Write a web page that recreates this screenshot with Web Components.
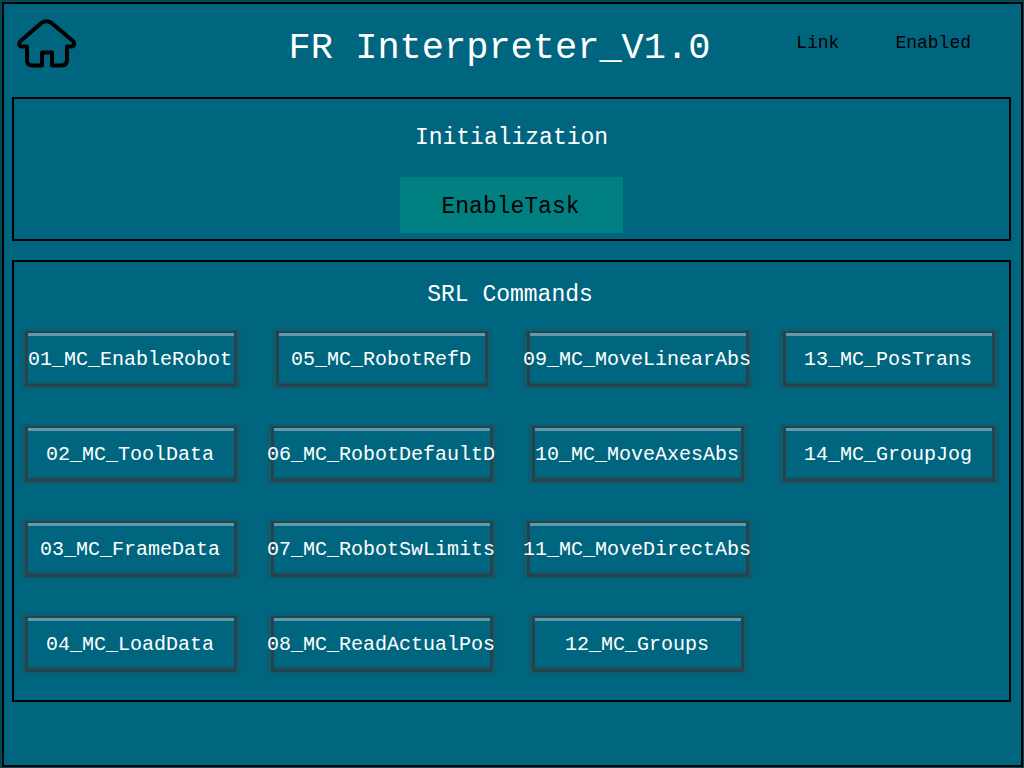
<!DOCTYPE html>
<html lang="en">
<head>
<meta charset="utf-8">
<title>FR Interpreter</title>
<style>
html, body { margin: 0; }
body { background: #006680; font-family: "Liberation Mono", monospace; color: #fff; }
</style>
</head>
<body>
<robot-screen></robot-screen>
<script>
class PanelButton extends HTMLElement {
  connectedCallback() {
    this.attachShadow({ mode: "open" }).innerHTML = `
      <style>
        :host { display: block; width: 212px; }
        :host([wide]) { width: 222px; }
        button {
          box-sizing: border-box; width: 100%; height: 56px; margin: 0; padding: 3px 2px 0 0;
          display: flex; align-items: center; justify-content: center;
          background: linear-gradient(#5c9cac, #5c9cac) top / 100% 3px no-repeat padding-box, #006680;
          border: solid #29434c; border-width: 2px 3px 3px;
          box-shadow: 4px 0 #0d5d70, -4px 0 #0d5d70, 4px 2px #0d5d70, -4px 2px #0d5d70, 4px -2px #0d5d70, -4px -2px #0d5d70, inset 0 -2px #145564;
          color: #fff; font: 20px/24px "Liberation Mono", monospace; white-space: nowrap;
        }
        span { flex: none; }
      </style>
      <button type="button"><span><slot></slot></span></button>`;
  }
}
customElements.define("panel-button", PanelButton);

class TaskButton extends HTMLElement {
  connectedCallback() {
    this.attachShadow({ mode: "open" }).innerHTML = `
      <style>
        :host { display: block; }
        button {
          box-sizing: border-box; width: 223px; height: 56px; padding: 3px 2px 0 0; border: 0; display: block;
          background: #008080; color: #000; font: 23px/32px "Liberation Mono", monospace;
        }
      </style>
      <button type="button"><slot></slot></button>`;
  }
}
customElements.define("task-button", TaskButton);

class GroupPanel extends HTMLElement {
  connectedCallback() {
    this.attachShadow({ mode: "open" }).innerHTML = `
      <style>
        :host { display: block; }
        section {
          box-sizing: border-box; border: 2px solid #000;
          display: flex; flex-direction: column; align-items: center;
          padding: var(--panel-pad, 23px 0 6px);
        }
        h2 { margin: 0; font-size: 23px; line-height: 32px; font-weight: 400; }
        .body { width: 100%; display: flex; justify-content: center; margin-top: var(--title-gap, 23px); }
        .body slot { flex: 1; display: flex; justify-content: center; }
      </style>
      <section><h2><slot name="title"></slot></h2><div class="body"><slot></slot></div></section>`;
  }
}
customElements.define("group-panel", GroupPanel);

class HomeButton extends HTMLElement {
  connectedCallback() {
    this.attachShadow({ mode: "open" }).innerHTML = `
      <style>
        :host { display: block; }
        button { display: block; padding: 0; border: 0; background: none; color: #000; }
        svg { display: block; }
      </style>
      <button type="button" aria-label="Home">
        <svg width="60" height="50" viewBox="0 0 60 50" fill="none" stroke="currentColor" stroke-width="4" stroke-linejoin="round">
          <path d="M25 3.5 Q29.500 1 34 3.5 L56.500 22.500 Q58.500 27.500 54.500 27.500 H50 V41 Q50 46.500 44.500 46.500 H35 V33.500 H25 V46.500 H15.500 Q10 46.500 10 41 V27.500 H5 Q1 27.500 3 22.500 Z"/>
        </svg>
      </button>`;
  }
}
customElements.define("home-button", HomeButton);

class RobotScreen extends HTMLElement {
  connectedCallback() {
    const columns = [
      [["01_MC_EnableRobot"], ["02_MC_ToolData"], ["03_MC_FrameData"], ["04_MC_LoadData"]],
      [["05_MC_RobotRefD"], ["06_MC_RobotDefaultD", 1], ["07_MC_RobotSwLimits", 1], ["08_MC_ReadActualPos", 1]],
      [["09_MC_MoveLinearAbs", 1], ["10_MC_MoveAxesAbs"], ["11_MC_MoveDirectAbs", 1], ["12_MC_Groups"]],
      [["13_MC_PosTrans"], ["14_MC_GroupJog"]]
    ];
    const commands = columns.map(c => `<div class="col">${c.map(([t, w]) =>
      `<panel-button${w ? " wide" : ""}>${t}</panel-button>`).join("")}</div>`).join("");
    this.attachShadow({ mode: "open" }).innerHTML = `
      <style>
        :host {
          display: block; box-sizing: border-box; min-height: 100vh;
          border: solid #00485a; border-width: 2px 1px 1px 2px; background: #000;
        }
        main {
          box-sizing: border-box; min-height: calc(100vh - 3px); padding: 0 10px 20px 8px;
          border: 2px solid #000; border-radius: 2px; background: #006680;
        }
        header {
          display: grid; grid-template-columns: 264px 1fr 288px; height: 93px; align-items: start;
        }
        home-button { margin: 15px 0 0 5px; }
        h1 { margin: 22px 0 0; text-align: center; font-size: 37px; line-height: 44px; font-weight: 400; white-space: nowrap; }
        .status { display: flex; justify-content: flex-end; gap: 56px; padding: 27px 40px 0 0; color: #000; font-size: 18px; line-height: 24px; }
        .commands { margin-top: 19px; --panel-pad: 17px 14px 28px 11px; --title-gap: 20px; }
        .grid { flex: 1; display: flex; justify-content: space-between; }
        .col { display: flex; flex-direction: column; align-items: center; gap: 39px; }
      </style>
      <main>
        <header>
          <home-button></home-button>
          <h1>FR Interpreter_V1.0</h1>
          <div class="status"><span>Link</span><span>Enabled</span></div>
        </header>
        <group-panel><span slot="title">Initialization</span><task-button>EnableTask</task-button></group-panel>
        <group-panel class="commands"><span slot="title">SRL Commands</span><div class="grid">${commands}</div></group-panel>
      </main>`;
  }
}
customElements.define("robot-screen", RobotScreen);
</script>
</body>
</html>
